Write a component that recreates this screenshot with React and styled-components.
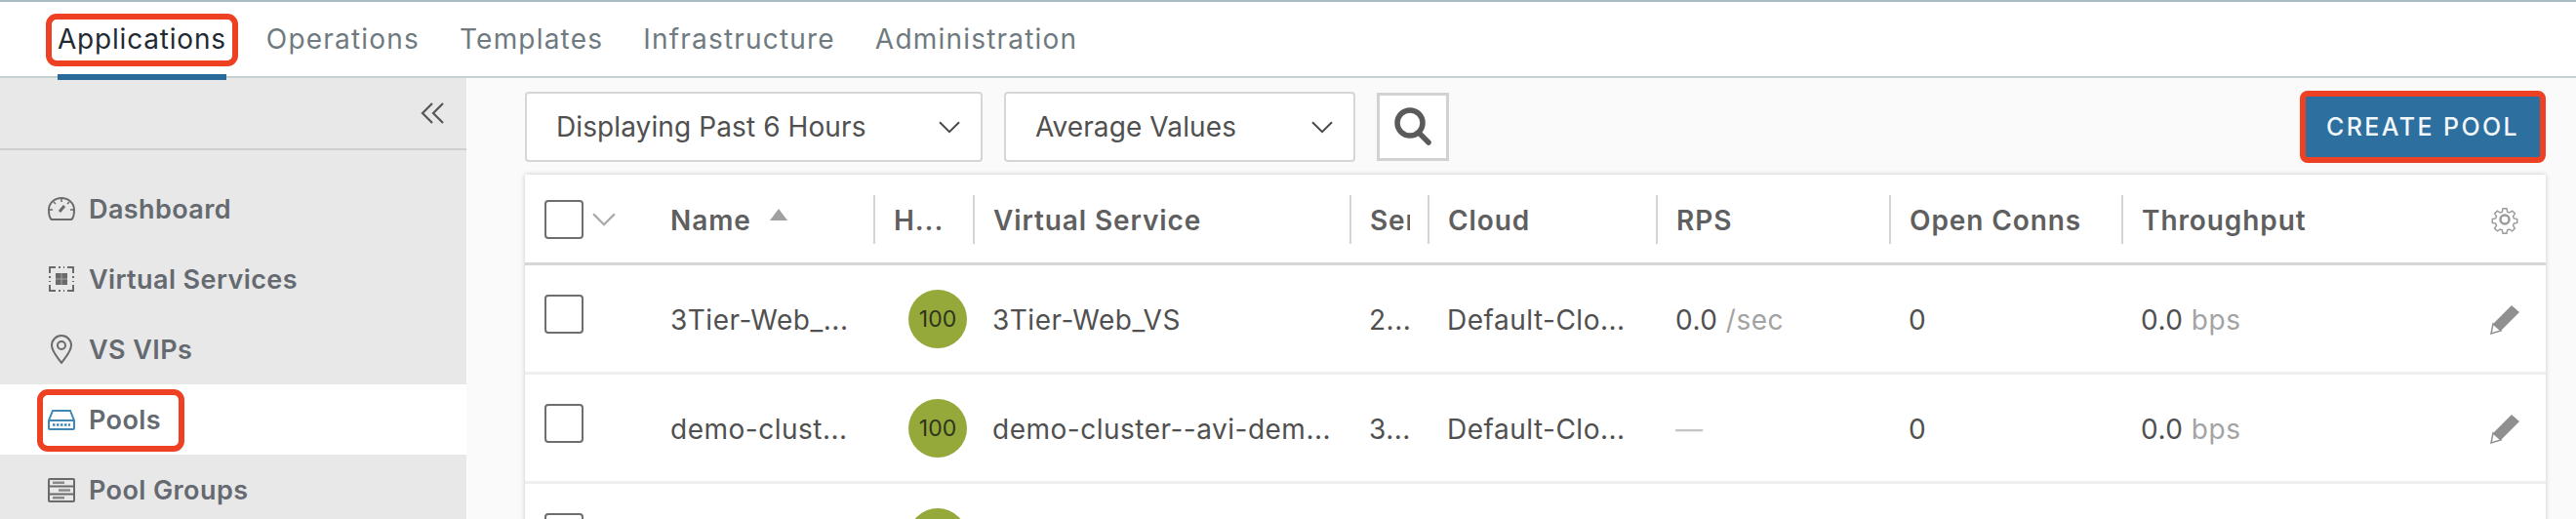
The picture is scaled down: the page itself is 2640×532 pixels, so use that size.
import React from "react";
import styled, { createGlobalStyle } from "styled-components";

const GlobalStyle = createGlobalStyle`
  html, body {
    margin: 0;
    padding: 0;
    background: #fafafa;
    font-family: "Inter", "Open Sans", sans-serif;
  }
`;

const Page = styled.div`
  width: 2640px;
  height: 532px;
  overflow: hidden;
  display: flex;
  flex-direction: column;
`;

const Nav = styled.nav`
  height: 80px;
  box-sizing: border-box;
  flex: none;
  background: #fff;
  border-top: 2px solid #a9bcc4;
  border-bottom: 2px solid #c5d0d3;
  padding-left: 59px;
  display: flex;
  gap: 41px;
`;

const Tab = styled.div`
  position: relative;
  height: 80px;
  box-sizing: border-box;
  padding-top: 21px;
  line-height: 34px;
  font-size: 28px;
  letter-spacing: ${(p) => (p.$active ? "0.8px" : "1.2px")};
  color: ${(p) => (p.$active ? "#1f2a33" : "#6f7a80")};
  border-bottom: ${(p) => (p.$active ? "6px solid #2a6a9b" : "none")};
  &::after {
    content: "";
    display: ${(p) => (p.$active ? "block" : "none")};
    position: absolute;
    left: -12px;
    right: -12px;
    top: 12px;
    height: 54px;
    box-sizing: border-box;
    border: 6px solid #ee4023;
    border-radius: 11px;
  }
`;

const Body = styled.div`
  flex: 1;
  display: flex;
  min-height: 0;
`;

const Sidebar = styled.aside`
  width: 478px;
  flex: none;
  background: #e8e8e8;
`;

const CollapseRow = styled.div`
  height: 74px;
  box-sizing: border-box;
  border-bottom: 2px solid #cfcfcf;
  padding: 24px 22px 0 0;
  display: flex;
  justify-content: flex-end;
  color: #555;
`;

const SideList = styled.div`
  padding-top: 24px;
`;

const SideItem = styled.div`
  height: 72px;
  box-sizing: border-box;
  padding-left: 48px;
  display: flex;
  align-items: center;
  gap: 13px;
  font-size: 27px;
  font-weight: 600;
  letter-spacing: 0.4px;
  color: #646a70;
  background: ${(p) => (p.$active ? "#fff" : "transparent")};
  position: relative;
  &::after {
    content: "";
    display: ${(p) => (p.$active ? "block" : "none")};
    position: absolute;
    left: 38px;
    top: 5px;
    width: 151px;
    height: 64px;
    box-sizing: border-box;
    border: 6px solid #ee4023;
    border-radius: 11px;
  }
`;

const IconBox = styled.svg`
  width: 30px;
  height: 30px;
  flex: none;
`;

const Main = styled.main`
  flex: 1;
  min-width: 0;
  background: #fafafa;
  padding: 13px 31px 0 60px;
  display: flex;
  flex-direction: column;
  gap: 12px;
`;

const Toolbar = styled.div`
  display: flex;
  align-items: center;
  gap: 22px;
  height: 74px;
`;

const Select = styled.div`
  width: ${(p) => p.$width}px;
  height: 72px;
  box-sizing: border-box;
  background: #fff;
  border: 2px solid #d6d6d6;
  border-radius: 4px;
  padding: 0 20px 0 30px;
  display: flex;
  align-items: center;
  justify-content: space-between;
  font-size: 28px;
  letter-spacing: 0.1px;
  color: #505050;
`;

const SearchButton = styled.div`
  width: 74px;
  height: 70px;
  box-sizing: border-box;
  border: 3px solid #d2d2d2;
  background: #fff;
  display: flex;
  align-items: center;
  justify-content: center;
`;

const CreateButton = styled.button`
  margin-left: auto;
  width: 252px;
  height: 74px;
  box-sizing: border-box;
  background: #2d6f9f;
  border: 6px solid #ee4023;
  border-radius: 8px;
  color: #f2f7fa;
  font-family: inherit;
  font-size: 25px;
  font-weight: 500;
  letter-spacing: 2.4px;
  padding: 0;
`;

const Table = styled.div`
  background: #fff;
  box-shadow: 0 0 5px rgba(0, 0, 0, 0.2);
  flex: 1;
`;

const columns = "129px 228px 102px 386px 80px 234px 239px 238px 326px 109px";

const HeaderRow = styled.div`
  display: grid;
  grid-template-columns: ${columns};
  height: 93px;
  box-sizing: border-box;
  border-bottom: 3px solid #d6d6d6;
  align-items: center;
  padding-top: 2px;
`;

const HeadCell = styled.div`
  height: 50px;
  box-sizing: border-box;
  padding: 2px 18px 0 ${(p) => (p.$divided ? "19px" : "20px")};
  display: flex;
  align-items: center;
  gap: 18px;
  white-space: nowrap;
  font-size: 28px;
  font-weight: 600;
  letter-spacing: 0.9px;
  color: #5f5f5f;
  border-left: ${(p) => (p.$divided ? "2px solid #d4d4d4" : "none")};
`;

const HeadLabel = styled.span`
  min-width: 0;
  overflow: hidden;
`;

const SortArrow = styled.svg`
  flex: none;
  margin-bottom: 12px;
`;

const SelectHead = styled.div`
  padding-left: 20px;
  display: flex;
  align-items: center;
  gap: 8px;
`;

const GearCell = styled.div`
  display: flex;
  justify-content: flex-end;
  padding-right: 26px;
`;

const Row = styled.div`
  display: grid;
  grid-template-columns: ${columns};
  height: 112px;
  box-sizing: border-box;
  border-bottom: 3px solid #eeeeee;
  align-items: center;
`;

const Cell = styled.div`
  padding: 2px 0 0 20px;
  font-size: 28px;
  letter-spacing: 0.5px;
  color: #505050;
  white-space: nowrap;
  overflow: hidden;
`;

const Unit = styled.span`
  color: #a3a3a3;
`;

const Dash = styled.span`
  color: #c4c4c4;
`;

const Check = styled.div`
  width: 40px;
  height: 40px;
  box-sizing: border-box;
  border: 2px solid #6e6e6e;
  border-radius: 4px;
  background: #fff;
`;

const RowCheck = styled(Check)`
  margin: 0 0 10px 20px;
`;

const HealthCell = styled.div`
  display: flex;
  justify-content: flex-end;
  padding-right: 6px;
`;

const Health = styled.div`
  width: 60px;
  height: 60px;
  border-radius: 50%;
  background: #94a93a;
  color: #2f3320;
  font-size: 23px;
  display: flex;
  align-items: center;
  justify-content: center;
`;

const EditCell = styled.div`
  display: flex;
  justify-content: flex-end;
  padding-right: 26px;
`;

const Chevron = ({ size = 24, color = "#4a4a4a" }) => (
  <svg width={size} height={size * 0.6} viewBox="0 0 24 14" fill="none" stroke={color} strokeWidth="2">
    <path d="M2 2l10 10L22 2" />
  </svg>
);

const Icons = {
  dashboard: (
    <IconBox viewBox="0 0 30 30" fill="none" stroke="#6a6a6a" strokeWidth="2">
      <path d="M5 26h20c2-1 3-4 3-10C28 9 22 4 15 4S2 9 2 16c0 6 1 9 3 10z" />
      <path d="M13 18l5-6" strokeWidth="3" />
      <path d="M6 16H3M27 16h-3M15 8V5M9 10L7 8M21 10l2-2" strokeWidth="1.5" />
    </IconBox>
  ),
  services: (
    <IconBox viewBox="0 0 30 30" fill="none" stroke="#6a6a6a" strokeWidth="2">
      <path d="M3 9V3h6M21 3h6v6M27 21v6h-6M9 27H3v-6" />
      <path d="M3 12v2M3 17v1M27 12v2M27 17v1M12 3h2M17 3h1M12 27h2M17 27h1" />
      <rect x="9" y="9" width="12" height="12" fill="#6a6a6a" stroke="none" />
      <path d="M15 9v12M9 15h12" stroke="#a8a8a8" strokeWidth="1" />
    </IconBox>
  ),
  vip: (
    <IconBox viewBox="0 0 30 30" fill="none" stroke="#6a6a6a" strokeWidth="2">
      <path d="M15 29C10 22 5 17 5 11a10 10 0 0 1 20 0c0 6-5 11-10 18z" />
      <circle cx="15" cy="11" r="4" />
    </IconBox>
  ),
  pools: (
    <IconBox viewBox="0 0 30 30" fill="none" stroke="#3f87b5" strokeWidth="2">
      <path d="M2 16L6 6h18l4 10v8a1 1 0 0 1-1 1H3a1 1 0 0 1-1-1z" />
      <path d="M2 16h26" />
      <path d="M6 20.500h18" strokeWidth="2.500" strokeDasharray="2.500 1.500" />
    </IconBox>
  ),
  groups: (
    <IconBox viewBox="0 0 30 30" fill="none" stroke="#6a6a6a" strokeWidth="2">
      <rect x="2" y="4" width="26" height="23" rx="1" />
      <path d="M2 11.500h26M2 19.500h26" />
      <path d="M6 7.750h12M12 15.500h12M6 23.250h12" stroke="#8a8a8a" strokeWidth="2.500" />
    </IconBox>
  ),
};

const Gear = () => (
  <svg width="32" height="32" viewBox="0 0 32 32" fill="none" stroke="#9a9a9a" strokeWidth="1.800">
    <path d="M13.500 2h5l.8 4.200 2.600 1.100 3.600-2.400 3.500 3.500-2.400 3.600 1.100 2.600 4.200.8v5l-4.200.8-1.100 2.600 2.400 3.600-3.500 3.500-3.600-2.400-2.600 1.100-.8 4.200h-5l-.8-4.200-2.600-1.100-3.600 2.400-3.500-3.500 2.400-3.600-1.100-2.600-4.200-.8v-5l4.200-.8 1.100-2.600-2.400-3.600 3.500-3.500 3.600 2.400 2.600-1.100z" transform="translate(3.200 3.200) scale(.8)" />
    <circle cx="16" cy="16" r="4.500" strokeWidth="2.500" />
  </svg>
);

const Pencil = () => (
  <svg width="32" height="32" viewBox="0 0 32 32">
    <path d="M23 2l8 7L12 28l-8-7z" fill="#8f8f8f" />
    <path d="M4 21l8 7-10 3z" fill="#fff" stroke="#8f8f8f" strokeWidth="1.500" />
  </svg>
);

const tabs = ["Applications", "Operations", "Templates", "Infrastructure", "Administration"];

const sideItems = [
  { label: "Dashboard", icon: "dashboard" },
  { label: "Virtual Services", icon: "services" },
  { label: "VS VIPs", icon: "vip" },
  { label: "Pools", icon: "pools", active: true },
  { label: "Pool Groups", icon: "groups" },
];

const headers = ["Name", "H...", "Virtual Service", "Ser", "Cloud", "RPS", "Open Conns", "Throughput"];

const pools = [
  { name: "3Tier-Web_...", health: "100", vs: "3Tier-Web_VS", servers: "2...", cloud: "Default-Clo...", rps: "0.0", conns: "0", tp: "0.0" },
  { name: "demo-clust...", health: "100", vs: "demo-cluster--avi-dem...", servers: "3...", cloud: "Default-Clo...", rps: null, conns: "0", tp: "0.0" },
  { name: "", health: "", vs: "", servers: "", cloud: "", rps: "", conns: "", tp: "" },
];

export default function App() {
  return (
    <Page>
      <GlobalStyle />
      <Nav>
        {tabs.map((tab, i) => (
          <Tab key={tab} $active={i === 0}>{tab}</Tab>
        ))}
      </Nav>
      <Body>
        <Sidebar>
          <CollapseRow>
            <svg width="26" height="24" viewBox="0 0 26 24" fill="none" stroke="#555" strokeWidth="2.200">
              <path d="M13 2L3 12l10 10M24 2L14 12l10 10" />
            </svg>
          </CollapseRow>
          <SideList>
            {sideItems.map((item) => (
              <SideItem key={item.label} $active={item.active}>
                {Icons[item.icon]}
                {item.label}
              </SideItem>
            ))}
          </SideList>
        </Sidebar>
        <Main>
          <Toolbar>
            <Select $width={469}>
              Displaying Past 6 Hours
              <Chevron />
            </Select>
            <Select $width={360}>
              Average Values
              <Chevron />
            </Select>
            <SearchButton>
              <svg width="44" height="44" viewBox="0 0 44 44" fill="none" stroke="#5a5a5a" strokeWidth="5.500" strokeLinecap="round">
                <circle cx="19" cy="18" r="13" />
                <path d="M29 29l9 9" />
              </svg>
            </SearchButton>
            <CreateButton>CREATE POOL</CreateButton>
          </Toolbar>
          <Table>
            <HeaderRow>
              <SelectHead>
                <Check />
                <Chevron size={26} color="#a8a8a8" />
              </SelectHead>
              {headers.map((h, i) => (
                <HeadCell key={h} $divided={i > 0}>
                  <HeadLabel>{h}</HeadLabel>
                  {i === 0 && (
                    <SortArrow width="20" height="14" viewBox="0 0 20 14">
                      <path d="M10 1l9 12H1z" fill="#a0a0a0" />
                    </SortArrow>
                  )}
                </HeadCell>
              ))}
              <GearCell>
                <Gear />
              </GearCell>
            </HeaderRow>
            {pools.map((pool, i) => (
              <Row key={i}>
                <RowCheck />
                <Cell>{pool.name}</Cell>
                <HealthCell>
                  <Health>{pool.health}</Health>
                </HealthCell>
                <Cell>{pool.vs}</Cell>
                <Cell>{pool.servers}</Cell>
                <Cell>{pool.cloud}</Cell>
                <Cell>
                  {pool.rps === null ? <Dash>—</Dash> : pool.rps && (
                    <>
                      {pool.rps} <Unit>/sec</Unit>
                    </>
                  )}
                </Cell>
                <Cell>{pool.conns}</Cell>
                <Cell>
                  {pool.tp && (
                    <>
                      {pool.tp} <Unit>bps</Unit>
                    </>
                  )}
                </Cell>
                <EditCell>
                  <Pencil />
                </EditCell>
              </Row>
            ))}
          </Table>
        </Main>
      </Body>
    </Page>
  );
}
